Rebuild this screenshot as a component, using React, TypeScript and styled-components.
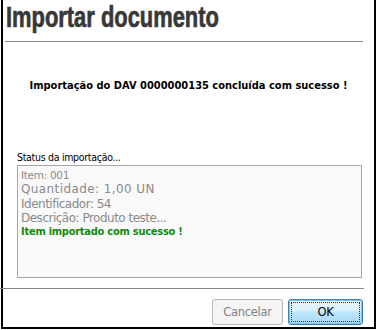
import React from "react";
import styled, { createGlobalStyle } from "styled-components";

const Global = createGlobalStyle`
  html, body { margin: 0; padding: 0; background: #ffffff; }
  body { font-family: "DejaVu Sans Condensed", "DejaVu Sans", sans-serif; }
  * { box-sizing: border-box; }
`;

const Window = styled.div`
  margin-left: 1px;
  width: 375px;
  height: 329px;
  border-left: 2px solid #000;
  border-right: 2px solid #000;
  border-bottom: 2px solid #000;
  display: flex;
  flex-direction: column;
  background: #fff;
`;

const Title = styled.h1`
  margin: 0;
  height: 41px;
  padding: 1px 0 0 3px;
  font-family: "Liberation Sans", Arial, sans-serif;
  font-weight: bold;
  font-size: 29px;
  line-height: 32px;
  color: #383838;
  white-space: nowrap;
  -webkit-text-stroke: 0.7px #383838;
`;

const TitleText = styled.span`
  display: inline-block;
  transform: scaleX(0.755);
  transform-origin: left center;
`;

const Rule = styled.div<{ $left: number; $width: number }>`
  height: 1px;
  background: #858585;
  margin-left: ${(p) => p.$left}px;
  width: ${(p) => p.$width}px;
  flex-shrink: 0;
`;

const Message = styled.div`
  height: 99px;
  padding-top: 37px;
  text-align: center;
  font-weight: bold;
  font-size: 11px;
  color: #000;
  font-family: "DejaVu Sans Condensed", "DejaVu Sans", sans-serif;
`;

const StatusSection = styled.div`
  padding-left: 14px;
  display: flex;
  flex-direction: column;
`;

const Label = styled.div`
  font-family: "DejaVu Sans Condensed", "DejaVu Sans", sans-serif;
  font-size: 10.5px;
  letter-spacing: -0.3px;
  line-height: 13px;
  height: 24px;
  padding-top: 10px;
  color: #000;
`;

const LogBox = styled.div`
  width: 345px;
  height: 113px;
  border: 1px solid #a6a6a6;
  background: #f9f9f9;
  padding: 2px 3px;
  font-family: "DejaVu Sans", Verdana, sans-serif;
  display: flex;
  flex-direction: column;
`;

const LogLine = styled.div<{ $small?: boolean; $wide?: boolean }>`
  font-size: ${(p) => (p.$small ? "10.5px" : "12px")};
  letter-spacing: ${(p) => (p.$small ? "-0.3px" : p.$wide ? "0.4px" : "-0.5px")};
  line-height: 14.3px;
  color: #8a8a8a;
`;

const SuccessLine = styled.div`
  font-family: "DejaVu Sans Condensed", "DejaVu Sans", sans-serif;
  font-size: 11px;
  font-weight: bold;
  letter-spacing: -0.25px;
  line-height: 14.3px;
  color: #138a0a;
`;

const Spacer = styled.div`
  height: 10px;
`;

const ButtonRow = styled.div`
  display: flex;
  justify-content: flex-end;
  gap: 5px;
  padding-right: 11px;
  padding-top: 10px;
`;

const Button = styled.button<{ $primary?: boolean }>`
  width: ${(p) => (p.$primary ? "75px" : "71px")};
  height: 26px;
  border-radius: 3px;
  font-family: "DejaVu Sans", Verdana, sans-serif;
  font-size: 11.5px;
  letter-spacing: -0.3px;
  padding: 0;
  position: relative;
  border: 1px solid ${(p) => (p.$primary ? "#3c7fb1" : "#b5b9bc")};
  color: ${(p) => (p.$primary ? "#000" : "#838383")};
  background: ${(p) =>
    p.$primary
      ? "linear-gradient(#eaf6fd 0%, #d9f0fc 45%, #bee6fd 50%, #a7d9f5 100%)"
      : "#f4f4f4"};
  box-shadow: ${(p) => (p.$primary ? "inset 0 0 0 1px #7ec4e8" : "none")};
`;

const Focus = styled.span`
  position: absolute;
  inset: 2px;
  border: 1px dotted #6b1a1a;
  display: flex;
  align-items: center;
  justify-content: center;
`;

export default function App() {
  return (
    <>
      <Global />
      <Window>
        <Title>
          <TitleText>Importar documento</TitleText>
        </Title>
        <Rule $left={2} $width={358} />
        <Message>Importação do DAV 0000000135 concluída com sucesso !</Message>
        <StatusSection>
          <Label>Status da importação...</Label>
          <LogBox>
            <LogLine $small>Item: 001</LogLine>
            <LogLine $wide>Quantidade: 1,00 UN</LogLine>
            <LogLine>Identificador: 54</LogLine>
            <LogLine>Descrição: Produto teste...</LogLine>
            <SuccessLine>Item importado com sucesso !</SuccessLine>
          </LogBox>
        </StatusSection>
        <Spacer />
        <Rule $left={-3} $width={364} />
        <ButtonRow>
          <Button disabled>Cancelar</Button>
          <Button $primary>
            <Focus>OK</Focus>
          </Button>
        </ButtonRow>
      </Window>
    </>
  );
}
